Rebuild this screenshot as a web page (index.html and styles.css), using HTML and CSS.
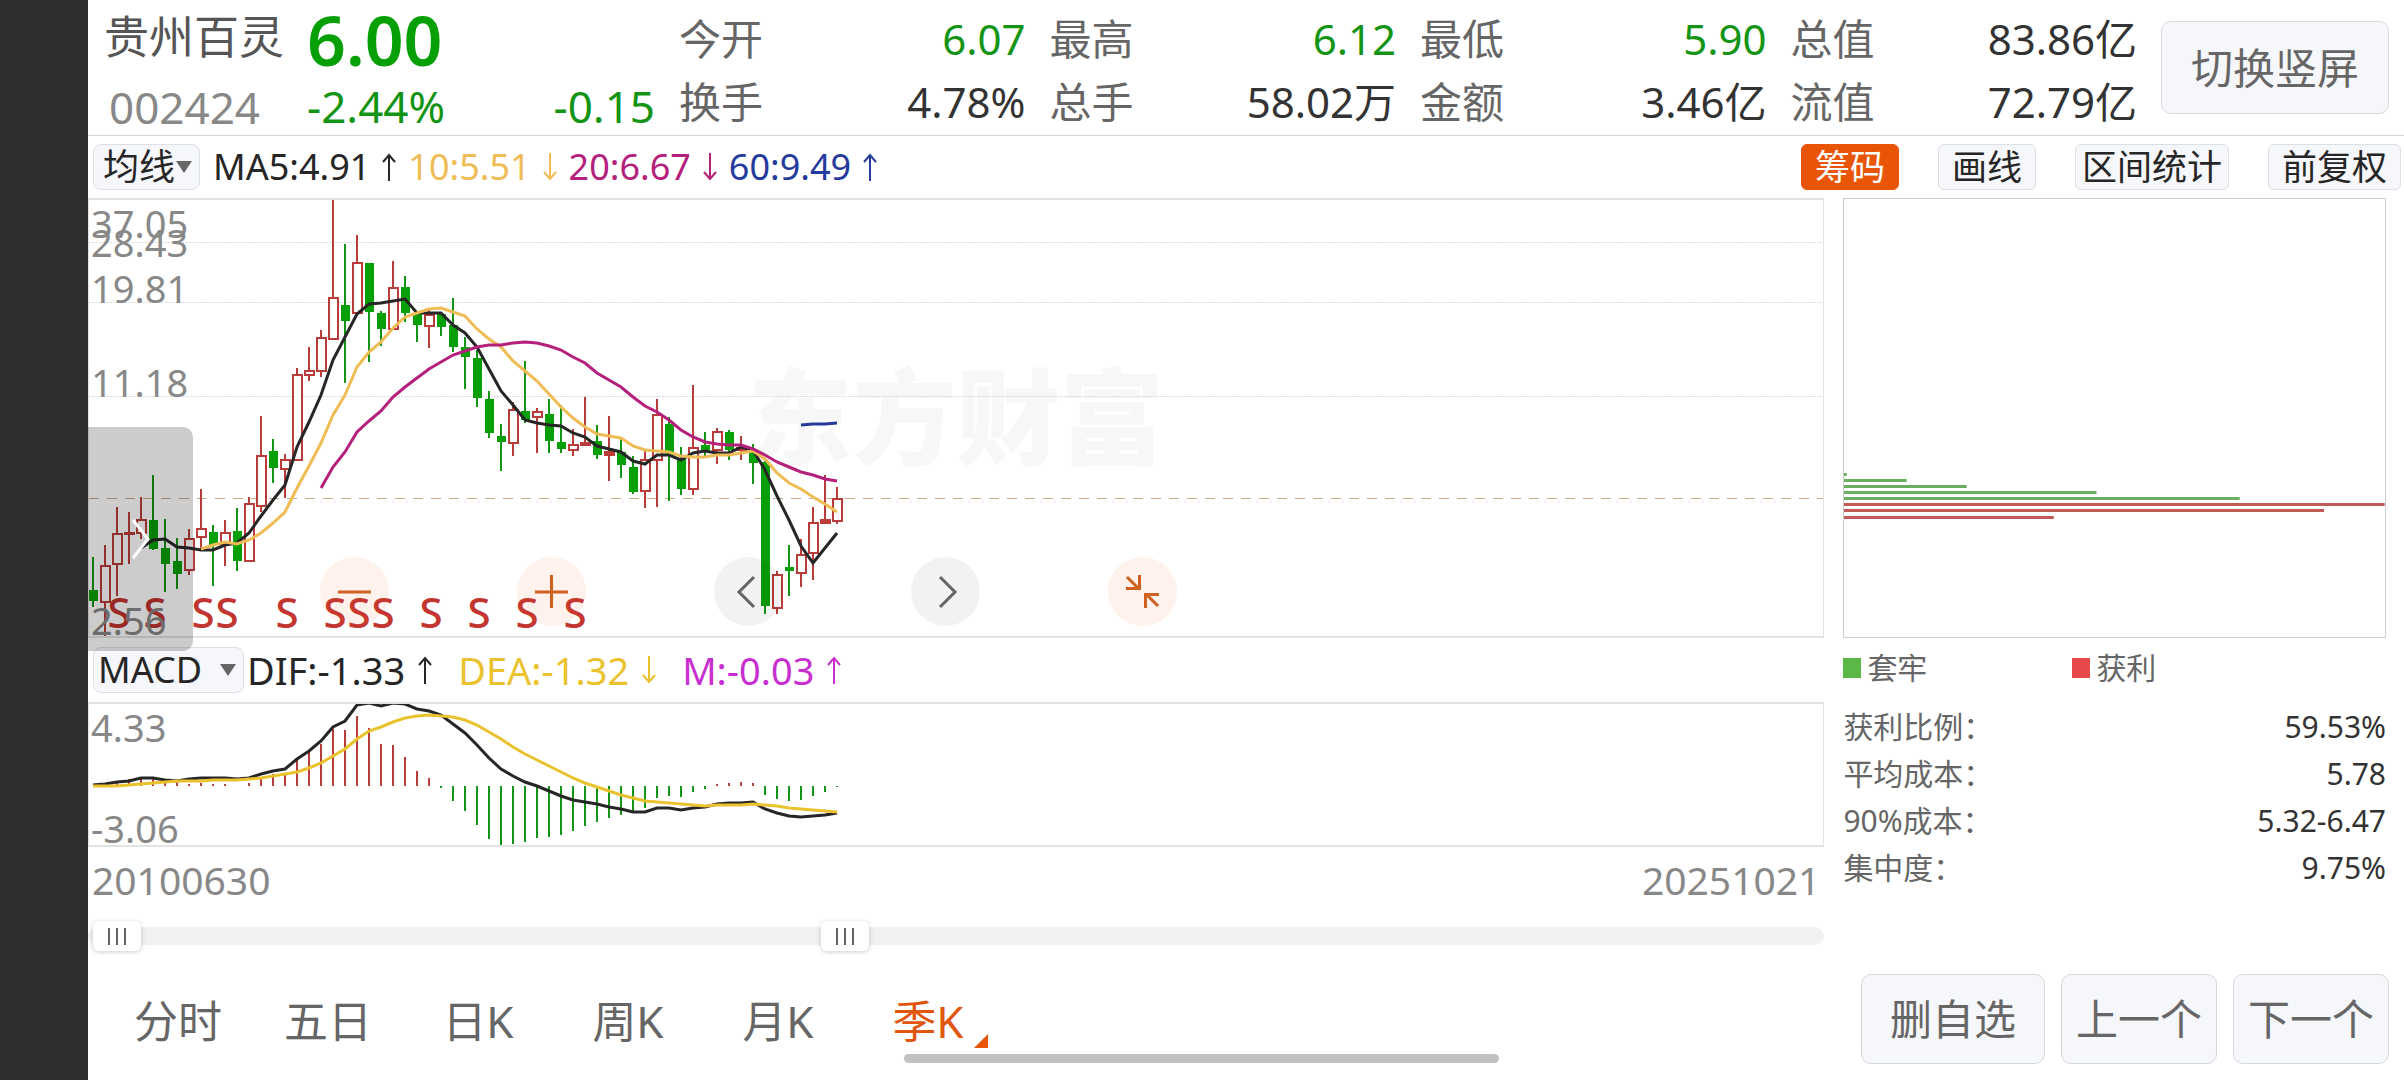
FILE: index.html
```html
<!DOCTYPE html>
<html lang="zh-CN">
<head>
  <meta charset="UTF-8" />
  <meta name="viewport" content="width=device-width, initial-scale=1.0"/>
  <title>贵州百灵 002424</title>
  <link rel="stylesheet" href="styles.css">
</head>
<body>
  <svg class="symbols" aria-hidden="true">
    <symbol id="arrowUp" viewBox="0 0 14 28"><path d="M7 28V2M1 9l6-7 6 7" /></symbol>
    <symbol id="arrowDown" viewBox="0 0 14 28"><path d="M7 0v26M1 19l6 7 6-7" /></symbol>
  </svg>

  <div class="app">
    <header class="header">
      <div class="quote">
        <h1 class="quote-name">贵州百灵</h1>
        <span class="quote-price">6.00</span>
        <span class="quote-code">002424</span>
        <span class="quote-change"><span>-2.44%</span><span>-0.15</span></span>
      </div>
      <dl class="stats">
        <div class="stat"><dt>今开</dt><dd class="down">6.07</dd></div>
        <div class="stat"><dt>最高</dt><dd class="down">6.12</dd></div>
        <div class="stat"><dt>最低</dt><dd class="down">5.90</dd></div>
        <div class="stat"><dt>总值</dt><dd>83.86亿</dd></div>
        <div class="stat"><dt>换手</dt><dd>4.78%</dd></div>
        <div class="stat"><dt>总手</dt><dd>58.02万</dd></div>
        <div class="stat"><dt>金额</dt><dd>3.46亿</dd></div>
        <div class="stat"><dt>流值</dt><dd>72.79亿</dd></div>
      </dl>
      <button type="button" class="btn btn-rotate">切换竖屏</button>
    </header>

    <div class="toolbar">
      <label class="picker picker-ma">
        <select aria-label="主图指标"><option>均线</option><option>BOLL</option></select>
      </label>
      <div class="legend legend-ma">
        <span class="ma5">MA5:4.91<svg class="arrow"><use href="#arrowUp" /></svg></span>
        <span class="ma10">10:5.51<svg class="arrow"><use href="#arrowDown" /></svg></span>
        <span class="ma20">20:6.67<svg class="arrow"><use href="#arrowDown" /></svg></span>
        <span class="ma60">60:9.49<svg class="arrow"><use href="#arrowUp" /></svg></span>
      </div>
      <div class="tools">
        <button type="button" class="tool active">筹码</button>
        <button type="button" class="tool">画线</button>
        <button type="button" class="tool tool-tight">区间统计</button>
        <button type="button" class="tool">前复权</button>
      </div>
    </div>

    <main class="content">
      <section class="charts">
        <div class="chart chart-main">
          <svg class="plot" id="mainPlot" role="img" aria-label="季K">
            <text class="watermark" x="50%" y="257">东方财富</text>
            <g class="grid">
              <line x1="0" x2="100%" y1="42" y2="42" />
              <line x1="0" x2="100%" y1="102" y2="102" />
              <line x1="0" x2="100%" y1="196" y2="196" />
            </g>
            <line class="price-line" x1="0" x2="100%" y1="298" y2="298" />
            <g id="candles"></g>
            <g id="averages"></g>
            <g id="signals" class="signals"></g>
            <g class="axis">
              <text x="2" y="38">37.05</text>
              <text x="2" y="57">28.43</text>
              <text x="2" y="103">19.81</text>
              <text x="2" y="197">11.18</text>
              <text x="2" y="435">2.56</text>
            </g>
          </svg>
          <div class="chart-controls">
            <button type="button" class="round warm" aria-label="缩小">
              <svg viewBox="0 0 69 69"><path d="M18 35h33" /></svg>
            </button>
            <button type="button" class="round warm" aria-label="放大">
              <svg viewBox="0 0 69 69"><path d="M18 35h33M34.500 18v33" /></svg>
            </button>
            <button type="button" class="round" aria-label="左移">
              <svg viewBox="0 0 69 69"><path d="M40 20L25 35l15 15" /></svg>
            </button>
            <button type="button" class="round" aria-label="右移">
              <svg viewBox="0 0 69 69"><path d="M29 20l15 15-15 15" /></svg>
            </button>
            <button type="button" class="round warm" aria-label="收起">
              <svg viewBox="0 0 69 69"><path d="M19 20l12 12M18 31.500h13.500V18M50 49L38 37M51 37.500H37.500V51" /></svg>
            </button>
          </div>
          <button type="button" class="drawer" aria-label="展开">
            <svg viewBox="0 0 20 42"><path d="M2 2l15 19L2 40" /></svg>
          </button>
        </div>

        <div class="macd-bar">
          <label class="picker picker-macd">
            <select aria-label="副图指标"><option>MACD</option><option>KDJ</option></select>
          </label>
          <div class="legend legend-macd">
            <span class="dif">DIF:-1.33<svg class="arrow"><use href="#arrowUp" /></svg></span>
            <span class="dea">DEA:-1.32<svg class="arrow"><use href="#arrowDown" /></svg></span>
            <span class="macd">M:-0.03<svg class="arrow"><use href="#arrowUp" /></svg></span>
          </div>
        </div>

        <div class="chart chart-macd">
          <svg class="plot" role="img" aria-label="MACD">
            <g id="macdBars"></g>
            <g id="macdLines"></g>
            <g class="axis">
              <text x="2" y="38">4.33</text>
              <text x="2" y="139">-3.06</text>
            </g>
          </svg>
        </div>

        <div class="dates"><span>20100630</span><span>20251021</span></div>

        <div class="slider">
          <input type="range" min="0" max="1000" value="3" aria-label="开始日期">
          <input type="range" min="0" max="1000" value="434" aria-label="结束日期">
        </div>
      </section>

      <aside class="chips">
        <svg class="chip-plot" id="chipPlot" role="img" aria-label="筹码分布"></svg>
        <div class="chip-legend">
          <span class="key key-loss">套牢</span>
          <span class="key key-gain">获利</span>
        </div>
        <dl class="chip-stats">
          <div><dt>获利比例：</dt><dd>59.53%</dd></div>
          <div><dt>平均成本：</dt><dd>5.78</dd></div>
          <div><dt>90%成本：</dt><dd>5.32-6.47</dd></div>
          <div><dt>集中度：</dt><dd>9.75%</dd></div>
        </dl>
      </aside>
    </main>

    <footer class="footer">
      <nav class="tabs">
        <button type="button">分时</button>
        <button type="button">五日</button>
        <button type="button">日K</button>
        <button type="button">周K</button>
        <button type="button">月K</button>
        <button type="button" class="current">季K</button>
      </nav>
      <div class="actions">
        <button type="button" class="btn btn-wide">删自选</button>
        <button type="button" class="btn">上一个</button>
        <button type="button" class="btn">下一个</button>
      </div>
    </footer>
    <div class="home-bar"></div>
  </div>

  <script src="script.js"></script>
</body>
</html>
```
FILE: styles.css
```css
* {
  box-sizing: border-box;
}

body {
  margin: 0;
  background: #fff;
  color: #333;
  font-family: 'Noto Sans', 'Noto Sans CJK SC', sans-serif;
}

button,
select,
input {
  font-family: inherit;
  color: inherit;
  margin: 0;
}

button,
select {
  cursor: pointer;
}

dl,
dd,
h1 {
  margin: 0;
  font-weight: 400;
}

svg {
  display: block;
}

.symbols {
  position: absolute;
  width: 0;
  height: 0;
}

.app {
  position: relative;
  min-height: 100vh;
  border-left: 88px solid #2f2f2f;
}

.down {
  color: #149414;
}

.btn {
  background: #f6f7fa;
  border: 1px solid #d5d9dd;
  border-radius: 10px;
  color: #666;
  font-size: 42px;
  line-height: 60px;
  padding: 0 14px;
  height: 90px;
}

/* header */
.header {
  display: flex;
  gap: 24px;
  height: 136px;
  padding: 7px 15px 0 16px;
  border-bottom: 1px solid #d4d4d4;
}

.quote {
  flex: none;
  width: 551px;
  display: grid;
  grid-template-columns: 203px 1fr;
  grid-template-rows: 66px 60px;
  font-size: 44px;
  line-height: 60px;
  white-space: nowrap;
}

.quote-name {
  font-size: 45px;
  color: #555;
}

.quote-price {
  font-size: 68px;
  line-height: 66px;
  font-weight: 600;
  color: #06a006;
}

.quote-code {
  padding-left: 5px;
  line-height: 68px;
  color: #888;
}

.quote-change {
  display: flex;
  justify-content: space-between;
  line-height: 66px;
  color: #149414;
}

.stats {
  flex: 1;
  display: grid;
  grid-template-columns: repeat(4, 1fr);
  grid-template-rows: 63px 63px;
  column-gap: 24px;
  font-size: 42px;
  line-height: 63px;
}

.stat {
  display: flex;
  justify-content: space-between;
}

.stat dt {
  color: #666;
}

.btn-rotate {
  flex: none;
  width: 228px;
  height: 93px;
  margin-top: 14px;
}

/* toolbar */
.toolbar {
  display: flex;
  align-items: center;
  height: 62px;
  padding: 0 3px 0 5px;
}

.picker {
  position: relative;
  flex: none;
}

.picker select {
  appearance: none;
  display: block;
  width: 100%;
  height: 46px;
  padding: 0 0 0 9px;
  border: 1px solid #dcdfe3;
  border-radius: 8px;
  background: #f6f7fa;
  color: #262626;
  font-size: 36px;
  line-height: 44px;
}

.picker-macd select {
  padding-left: 4px;
}

.picker::after {
  content: '';
  position: absolute;
  right: 8px;
  top: 17px;
  border: 8px solid transparent;
  border-top: 12px solid #666;
  border-bottom: 0;
  pointer-events: none;
}

.picker-ma {
  width: 107px;
}

.picker-macd {
  width: 151px;
}

.legend {
  display: flex;
  line-height: 46px;
  white-space: nowrap;
}

.legend span {
  display: flex;
  align-items: center;
}

.legend-ma {
  gap: 12px;
  margin-left: 13px;
  font-size: 36px;
}

.legend-ma .arrow {
  margin-left: 12px;
}

.legend-macd {
  gap: 26px;
  margin-left: 3px;
  font-size: 38px;
}

.legend-macd .arrow {
  margin-left: 13px;
}

.arrow {
  width: 14px;
  height: 28px;
  fill: none;
  stroke: currentColor;
  stroke-width: 2;
}

.ma5,
.dif {
  color: #262626;
}

.ma10 {
  color: #efbc55;
}

.ma20 {
  color: #b5207c;
}

.ma60 {
  color: #243a9c;
}

.dea {
  color: #eac22e;
}

.macd {
  color: #c82fd0;
}

.tools {
  display: flex;
  gap: 39px;
  margin-left: auto;
}

.tool {
  height: 46px;
  padding: 0 13px;
  border: 1px solid #dcdfe3;
  border-radius: 6px;
  background: #f6f7fa;
  color: #262626;
  font-size: 35px;
  line-height: 44px;
}

.tool-tight {
  padding: 0 6px;
}

.tool.active {
  background: #e85506;
  border-color: #e85506;
  color: #fff;
}

/* charts */
.content {
  display: grid;
  grid-template-columns: 16fr 5fr;
  column-gap: 19px;
  padding-right: 18px;
}

.chart {
  position: relative;
}

.chart-main {
  height: 440px;
}

.chart-macd {
  height: 145px;
}

.plot {
  width: 100%;
  height: 100%;
  border: 1px solid #e3e3e3;
  border-top-width: 2px;
  border-bottom-width: 2px;
}

.axis text {
  font-size: 38px;
  fill: #888;
}

.watermark {
  font-family: 'Noto Sans CJK SC', sans-serif;
  font-size: 104px;
  font-weight: 900;
  fill: #f7f7f7;
  text-anchor: middle;
}

.grid line {
  stroke: #dcdcdc;
  stroke-width: 1;
  stroke-dasharray: 2 1;
  shape-rendering: crispEdges;
}

.price-line {
  stroke: #c9ab8a;
  stroke-width: 1;
  stroke-dasharray: 10 8;
  shape-rendering: crispEdges;
}

.rise {
  stroke: #b93c3a;
  stroke-width: 2;
  fill: #fff;
}

.rise-flat {
  stroke: #b93c3a;
  stroke-width: 2;
  fill: #c83a36;
}

.fall {
  stroke: #149414;
  stroke-width: 2;
  fill: #06a006;
}

.fall rect {
  stroke: none;
}

.line {
  fill: none;
  stroke: currentColor;
  stroke-width: 3;
}

.signals text {
  font-size: 42px;
  font-weight: 500;
  fill: #c23531;
  text-anchor: middle;
}

.chart-controls {
  position: absolute;
  left: 232px;
  top: 359px;
  display: flex;
  gap: 128px;
}

.round {
  width: 69px;
  height: 69px;
  padding: 0;
  border: 0;
  border-radius: 50%;
  background: rgba(0, 0, 0, 0.05);
}

.round svg {
  fill: none;
  stroke: #666;
  stroke-width: 3;
}

.round.warm {
  background: rgba(255, 100, 30, 0.09);
}

.round.warm svg {
  stroke: #d0601f;
}

.drawer {
  position: absolute;
  z-index: 1;
  left: 0;
  top: 229px;
  width: 105px;
  height: 224px;
  padding: 0 0 0 43px;
  border: 0;
  border-radius: 0 10px 10px 0;
  background: rgba(0, 0, 0, 0.2);
}

.drawer svg {
  width: 20px;
  height: 42px;
  fill: none;
  stroke: #fff;
  stroke-width: 3;
}

.macd-bar {
  display: flex;
  align-items: center;
  height: 64px;
  padding-left: 5px;
}

.dates {
  display: flex;
  justify-content: space-between;
  padding: 0 4px 2px;
  font-size: 39px;
  line-height: 66px;
  color: #888;
}

.slider {
  position: relative;
  height: 18px;
  margin: 12px 0;
  border-radius: 9px;
  background: #f1f1f4;
}

.slider input {
  appearance: none;
  position: absolute;
  left: 0;
  top: -6px;
  width: 100%;
  height: 30px;
  background: none;
  pointer-events: none;
}

.slider input::-webkit-slider-thumb {
  appearance: none;
  width: 48px;
  height: 30px;
  border-radius: 6px;
  background:
    linear-gradient(#666, #666) 15px center / 2px 17px no-repeat,
    linear-gradient(#666, #666) 23px center / 2px 17px no-repeat,
    linear-gradient(#666, #666) 31px center / 2px 17px no-repeat,
    #fff;
  box-shadow: 0 1px 5px rgba(0, 0, 0, 0.2);
  pointer-events: auto;
}

/* chip distribution */
.chip-plot {
  width: 100%;
  height: 440px;
  border: 1px solid #ccc;
}

.chip-loss {
  fill: #6aae60;
}

.chip-gain {
  fill: #c25a58;
}

.chip-legend {
  display: grid;
  grid-template-columns: 229px 1fr;
  font-size: 30px;
  line-height: 60px;
  color: #666;
}

.key {
  display: flex;
  align-items: center;
  gap: 6px;
}

.key::before {
  content: '';
  width: 18px;
  height: 20px;
  background: #5ab946;
}

.key-gain::before {
  background: #e64a4a;
}

.chip-stats {
  margin-top: 5px;
  font-size: 30px;
  line-height: 47px;
}

.chip-stats div {
  display: flex;
  justify-content: space-between;
}

.chip-stats dt {
  color: #666;
}

/* footer */
.footer {
  display: flex;
  justify-content: space-between;
  padding: 17px 15px 16px;
}

.tabs {
  display: flex;
}

.tabs button {
  position: relative;
  width: 150px;
  height: 90px;
  padding: 0;
  border: 0;
  background: none;
  color: #666;
  font-size: 44px;
}

.tabs .current {
  color: #e0560f;
}

.tabs .current::after {
  content: '';
  position: absolute;
  right: 15px;
  bottom: 16px;
  border-left: 14px solid transparent;
  border-bottom: 14px solid #e85506;
}

.actions {
  display: flex;
  gap: 16px;
}

.btn-wide {
  padding: 0 28px;
}

.home-bar {
  position: absolute;
  left: 816px;
  bottom: 17px;
  width: 595px;
  height: 9px;
  border-radius: 5px;
  background: #c1c1c1;
}
```
FILE: script.js
```js
const STEP = 12;
const START = 4;
const ZERO = 82;

// type, high, open/close top, open/close bottom, low
const candles = [
  ['G', 359, 392, 403, 409], ['R', 347, 367, 405, 440], ['R', 309, 335, 367, 398],
  ['R', 314, 334, 336, 366], ['R', 299, 321, 336, 341], ['G', 277, 322, 351, 352],
  ['G', 321, 350, 366, 394], ['G', 340, 363, 376, 391], ['R', 331, 340, 373, 377],
  ['R', 291, 330, 340, 352], ['G', 327, 334, 347, 388], ['R', 322, 334, 347, 368],
  ['G', 310, 333, 363, 373], ['R', 299, 305, 364, 364], ['R', 218, 257, 309, 314],
  ['G', 241, 253, 270, 285], ['R', 256, 261, 272, 300], ['R', 170, 176, 263, 263],
  ['R', 149, 172, 178, 183], ['R', 132, 139, 174, 179], ['R', 1, 99, 142, 142],
  ['G', 46, 107, 123, 185], ['R', 37, 64, 116, 116], ['G', 65, 65, 114, 164],
  ['G', 113, 115, 131, 148], ['R', 63, 89, 132, 132], ['G', 78, 89, 115, 124],
  ['G', 114, 115, 127, 144], ['R', 112, 116, 129, 150], ['G', 115, 116, 129, 138],
  ['G', 100, 127, 149, 154], ['G', 139, 149, 159, 191], ['G', 152, 160, 200, 209],
  ['G', 193, 201, 235, 240], ['G', 226, 238, 244, 273], ['R', 204, 211, 246, 258],
  ['G', 163, 213, 222, 225], ['R', 210, 213, 220, 255], ['G', 201, 216, 243, 255],
  ['G', 207, 244, 251, 255], ['R', 231, 246, 253, 258], ['R', 199, 244, 248, 248],
  ['G', 227, 243, 257, 261], ['R', 218, 253, 258, 283], ['G', 241, 254, 267, 280],
  ['G', 258, 269, 294, 296], ['R', 253, 261, 294, 310], ['R', 201, 216, 263, 309],
  ['G', 219, 226, 258, 303], ['G', 249, 260, 291, 297], ['R', 187, 249, 292, 297],
  ['G', 234, 247, 252, 260], ['R', 230, 233, 253, 266], ['G', 232, 234, 252, 262],
  ['R', 238, 249, 253, 262], ['G', 246, 252, 265, 286], ['G', 263, 264, 408, 416],
  ['R', 373, 376, 411, 416], ['G', 347, 369, 373, 398], ['R', 341, 356, 376, 389],
  ['R', 309, 324, 356, 382], ['R', 277, 321, 326, 326], ['R', 289, 300, 324, 326]
];

// cls, first candle index, y values
const averages = [
  ['ma5', 4, [350, 342, 341, 349, 350, 352, 352, 347, 345, 335, 318, 302, 287, 249, 224, 197,
    162, 139, 116, 106, 105, 103, 101, 115, 115, 115, 127, 135, 149, 171, 193, 207, 222, 225,
    227, 228, 235, 239, 248, 251, 254, 263, 266, 257, 257, 262, 255, 253, 255, 255, 249, 252,
    272, 298, 322, 348, 365, 350, 335]],
  ['ma10', 9, [351, 347, 344, 346, 342, 335, 325, 314, 290, 268, 245, 217, 197, 169, 154, 144,
    130, 119, 115, 111, 110, 114, 118, 131, 141, 149, 163, 173, 183, 196, 209, 220, 229, 236,
    238, 240, 248, 252, 253, 254, 258, 259, 259, 257, 257, 255, 253, 261, 275, 285, 291, 299,
    306, 314]],
  ['ma20', 19, [290, 269, 254, 234, 223, 213, 199, 189, 180, 171, 164, 157, 153, 149, 147, 147,
    145, 144, 145, 148, 152, 159, 165, 175, 182, 189, 199, 208, 214, 222, 232, 239, 244, 246,
    247, 247, 251, 257, 264, 269, 274, 277, 281, 283]],
  ['ma60', 59, [227, 226, 226, 225]]
];

const signals = [2, 5, 9, 11, 16, 20, 22, 24, 28, 32, 36, 40];

const macdBars = [84, 83, 79, 77, 75, 77, 80, 81, 82, 81, 82, 82, 84, 81, 75, 72, 71, 57, 50, 42,
  27, 28, 14, 26, 42, 43, 55, 69, 76, 86, 99, 109, 123, 137, 145, 142, 140, 136, 135, 133, 129,
  124, 120, 116, 113, 111, 106, 96, 94, 95, 90, 87, 82, 81, 80, 81, 93, 97, 99, 98, 94, 90, 85];

const macdLines = [
  ['dif', 0, [83, 82, 80, 79, 76, 76, 78, 79, 77, 76, 76, 76, 77, 76, 72, 69, 67, 57, 49, 39, 25,
    19, 3, 1, 4, 1, 2, 7, 9, 13, 22, 31, 43, 56, 67, 74, 80, 84, 89, 94, 98, 100, 102, 105, 107,
    110, 110, 106, 106, 108, 106, 105, 102, 101, 101, 100, 107, 111, 114, 115, 114, 113, 111]],
  ['dea', 0, [84, 84, 84, 83, 82, 81, 80, 79, 79, 79, 78, 78, 78, 77, 76, 74, 72, 70, 66, 61, 54,
    47, 37, 29, 25, 20, 16, 14, 13, 14, 15, 18, 23, 30, 37, 45, 52, 58, 64, 70, 76, 81, 85, 89,
    93, 96, 99, 100, 101, 102, 103, 104, 103, 103, 103, 102, 103, 104, 106, 107, 108, 109, 110]]
];

// cls, y, share of the widest bar
const chips = [
  ['chip-loss', 274, 0.5], ['chip-loss', 280, 11.6], ['chip-loss', 286, 22.7],
  ['chip-loss', 292, 46.7], ['chip-loss', 298, 73.2], ['chip-gain', 304, 100],
  ['chip-gain', 310, 88.8], ['chip-gain', 317, 38.8]
];

const x = i => START + i * STEP;

function drawCandle([type, high, top, bottom, low], i) {
  const cx = x(i);
  // plot area starts below its 2px top border
  const y = v => v - 2;
  if (type === 'G') {
    return `<g class="fall"><path d="M${cx} ${y(high)}V${y(low)}" />` +
      `<rect x="${cx - 4}" y="${y(top)}" width="9" height="${bottom - top}" /></g>`;
  }
  const cls = bottom - top < 6 ? 'rise-flat' : 'rise';
  const height = Math.max(bottom - top - 2, 1);
  return `<g class="${cls}"><path d="M${cx} ${y(high)}V${y(top)}M${cx} ${y(bottom)}V${y(low)}" />` +
    `<rect x="${cx - 4}" y="${y(top) + 1}" width="9" height="${height}" /></g>`;
}

function drawLine([cls, first, values]) {
  const points = values.map((v, i) => `${x(first + i)},${v - 2}`).join(' ');
  return `<polyline class="line ${cls}" points="${points}" />`;
}

function drawMacdBar(v, i) {
  const end = v - 2;
  return `<path class="${end > ZERO ? 'fall' : 'rise'}" d="M${x(i)} ${ZERO}V${end}" />`;
}

function drawChip([cls, y, share]) {
  return `<rect class="${cls}" x="0" y="${y}" width="${share}%" height="3" />`;
}

document.getElementById('candles').innerHTML = candles.map(drawCandle).join('');
document.getElementById('averages').innerHTML = averages.map(drawLine).join('');
document.getElementById('signals').innerHTML =
  signals.map(i => `<text x="${x(i) + 2}" y="428">S</text>`).join('');
document.getElementById('macdBars').innerHTML = macdBars.map(drawMacdBar).join('');
document.getElementById('macdLines').innerHTML = macdLines.map(drawLine).join('');
document.getElementById('chipPlot').innerHTML = chips.map(drawChip).join('');
```
